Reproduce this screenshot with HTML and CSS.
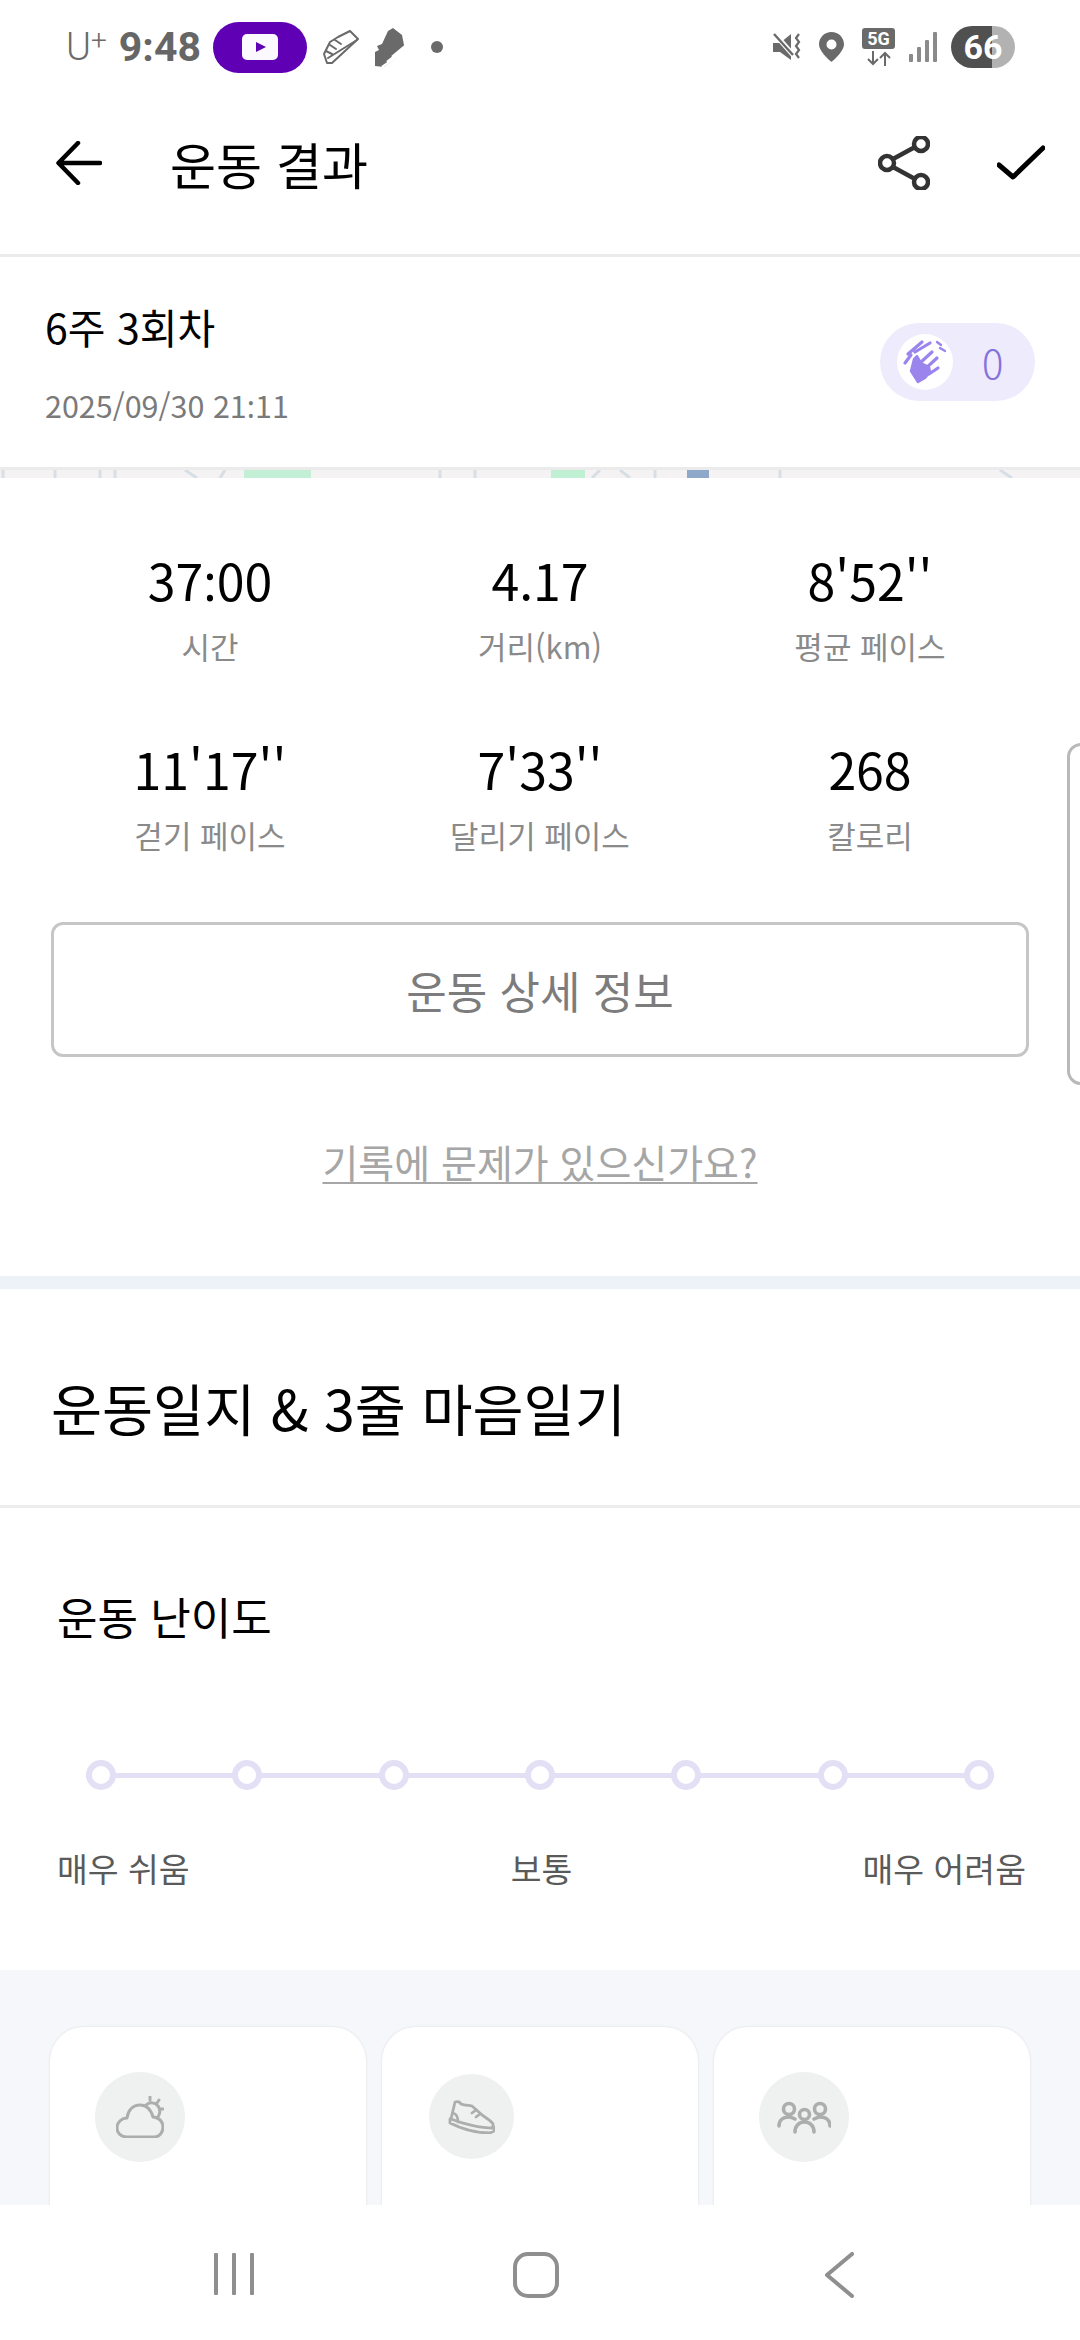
FILE: index.html
```html
<!DOCTYPE html>
<html lang="ko">
<head>
<meta charset="utf-8">
<title>운동 결과</title>
<link rel="stylesheet" href="styles.css">
</head>
<body>
<div class="screen">
  <div class="status">
    <div class="status-left">
      <span class="carrier">U<sup>+</sup></span>
      <span class="clock">9:48</span>
      <span class="yt-pill">
        <svg width="36" height="26" viewBox="0 0 36 26"><rect width="36" height="26" rx="5" fill="#fbf9ff"/><path d="M14 8l10 5-10 5z" fill="#5f00b5"/></svg>
      </span>
      <svg class="shoe-a" width="36" height="35" viewBox="0 0 36 35" fill="none" stroke="#6a6a6a" stroke-width="2" stroke-linejoin="round" stroke-linecap="round"><path d="M1 24L7 12l8-5L27 1l8 8L9 33H4z"/><path d="M5 28L34 10M7 15l6 4M12 10l6 4M3 21l6 3"/></svg>
      <svg class="shoe-b" width="30" height="39" viewBox="0 0 30 39"><path d="M1 38V24l4-2-2-4 5-2L14 3l5-3 9 7 2 10-6 12-14 10z" fill="#6a6a6a"/><path d="M8 39l22-15M13 34l17-13M18 29l12-10" stroke="#fff" stroke-width="2.400"/></svg>
      <span class="s-dot"></span>
    </div>
    <div class="status-right">
      <svg width="30" height="30" viewBox="0 0 30 30" fill="none"><path d="M1 11h7L19 2v26L8 20H1z" fill="#6a6a6a"/><path d="M1 0l22 25" stroke="#fff" stroke-width="5"/><path d="M2 2l19 21" stroke="#6a6a6a" stroke-width="2.400"/><path d="M27 2l-3 4 3 4-3 4 3 4-3 4 3 4" stroke="#6a6a6a" stroke-width="2.200"/></svg>
      <svg class="s-pin" width="25" height="30" viewBox="0 0 25 30"><path fill-rule="evenodd" d="M12.500 0C5.600 0 0 5.500 0 12.300 0 20 12.500 30 12.500 30S25 20 25 12.300C25 5.500 19.400 0 12.500 0zm0 7.500a5 5 0 1 1 0 10 5 5 0 0 1 0-10z" fill="#6a6a6a"/></svg>
      <span class="net">
        <span class="net-5g">5G</span>
        <svg width="26" height="15" viewBox="0 0 26 15" fill="none" stroke="#6a6a6a" stroke-width="2"><path d="M7 0v13M2 8l5 5 5-5M19 15V2M14 7l5-5 5 5"/></svg>
      </span>
      <svg width="28" height="30" viewBox="0 0 28 30" fill="#8a8a8a"><rect x="0" y="22" width="4" height="8" rx="1"/><rect x="8" y="15" width="4" height="15" rx="1"/><rect x="16" y="8" width="4" height="22" rx="1"/><rect x="24" y="0" width="4" height="30" rx="1"/></svg>
      <span class="battery">66</span>
    </div>
  </div>

  <header class="appbar">
    <svg class="back" width="46" height="44" viewBox="0 0 46 44" fill="none" stroke="#000" stroke-width="4.500" stroke-linecap="round" stroke-linejoin="round"><path d="M3 22h41M22 2L2.500 22 22 42"/></svg>
    <h1>운동 결과</h1>
    <svg class="share" width="52" height="54" viewBox="0 0 52 54" fill="none" stroke="#333" stroke-width="4.500"><circle cx="9" cy="27" r="7"/><circle cx="43" cy="8" r="7"/><circle cx="43" cy="46" r="7"/><path d="M15 23l22-12M15 31l22 12"/></svg>
    <svg class="check" width="48" height="36" viewBox="0 0 48 36" fill="none" stroke="#000" stroke-width="5" stroke-linecap="round" stroke-linejoin="round"><path d="M2 20l14 12L46 3"/></svg>
  </header>

  <section class="session">
    <div>
      <div class="session-name">6주 3회차</div>
      <div class="session-date">2025/09/30 21<span class="colon">:</span>11</div>
    </div>
    <div class="clap">
      <span class="clap-icon">
        <svg width="56" height="56" viewBox="0 0 56 56" fill="none" stroke="#9b85ec" stroke-width="3.200" stroke-linecap="round" stroke-linejoin="round"><path d="M8 29l6-8M11 20L25 8M18 18L33 9"/><path d="M14 37l3-12 3-3 4 7 8 4 1 5-5 6-7 4z" fill="#9b85ec" stroke-width="2.400"/><path d="M23 29l12-11M28 35l12-11M32 40l9-6"/><path d="M40 8l4 3M43 14l5 3" stroke-width="2.400"/></svg>
      </span>
      <span class="clap-count">0</span>
    </div>
  </section>

  <div class="map">
    <svg width="1080" height="8" viewBox="0 0 1080 8">
      <rect x="244" width="67" height="8" fill="#c2efd5"/><rect x="551" width="34" height="8" fill="#bff0d3"/><rect x="687" width="22" height="8" fill="#8ea8c9"/>
      <path d="M3 0v8M55 0v8M100 0v8M115 0v8M185 0l12 8M220 8l5-8M440 0v8M475 0v8M600 0l-8 8M620 0l10 8M655 0v8M780 0v8M1000 0l12 8" stroke="#d6dfe6" stroke-width="3" fill="none"/>
    </svg>
  </div>

  <section class="stats">
    <div class="stat-grid">
      <div class="stat"><b>37<i class="colon">:</i>00</b><span>시간</span></div>
      <div class="stat"><b>4.17</b><span>거리(km)</span></div>
      <div class="stat"><b>8'52''</b><span>평균 페이스</span></div>
      <div class="stat"><b>11'17''</b><span>걷기 페이스</span></div>
      <div class="stat"><b>7'33''</b><span>달리기 페이스</span></div>
      <div class="stat"><b>268</b><span>칼로리</span></div>
    </div>
    <div class="detail-btn">운동 상세 정보</div>
    <div class="issue"><a>기록에 문제가 있으신가요?</a></div>
    <div class="peek"></div>
  </section>

  <section class="diary-head">운동일지 &amp; 3줄 마음일기</section>

  <section class="difficulty">
    <div class="diff-title">운동 난이도</div>
    <div class="track">
      <i></i><i></i><i></i><i></i><i></i><i></i><i></i>
    </div>
    <div class="diff-labels"><span>매우 쉬움</span><span>보통</span><span>매우 어려움</span></div>
  </section>

  <section class="panel">
    <div class="card">
      <span class="card-ic">
        <svg width="48" height="42" viewBox="0 0 48 42" fill="none" stroke="#adadad" stroke-width="3" stroke-linecap="round" stroke-linejoin="round"><path d="M11 41C5 41 1 37 1 32c0-6 5-10 10-10C12 14 17 9 24 9c7 0 11 5 13 12 6 0 10 5 10 10 0 6-4 10-9 10z"/><path d="M30 9c3-3 9-3 12 1 3 4 2 9-1 12M34 1v3M43 4l-2 3M47 13h-3"/></svg>
      </span>
    </div>
    <div class="card">
      <span class="card-ic small">
        <svg width="47" height="34" viewBox="0 0 47 34" fill="none" stroke="#adadad" stroke-width="2.800" stroke-linejoin="round" stroke-linecap="round"><path d="M7 2c3-1 5 0 6 2 4 2 8 1 11 2l9 8c4 4 10 6 12 10v4C33 28 15 24 3 19z"/><path d="M2 19v4c10 5 26 10 40 10l4-2v-4M24 13l4-3M28 17l4-3M5 13c4 1 5 5 5 9"/></svg>
      </span>
    </div>
    <div class="card">
      <span class="card-ic">
        <svg width="54" height="33" viewBox="0 0 54 33" fill="none" stroke="#adadad" stroke-width="3.600" stroke-linecap="round"><circle cx="12" cy="8" r="5.500"/><circle cx="43" cy="8" r="5.500"/><circle cx="27.500" cy="13.500" r="5"/><path d="M2 25c0-6 4-9 10-9 2 0 4 1 6 2M37 18c2-1 4-2 6-2 6 0 10 3 10 9M18 31c0-6 4-10 9.500-10S37 25 37 31"/></svg>
      </span>
    </div>
  </section>

  <nav class="nav">
    <svg width="44" height="44" viewBox="0 0 44 44" fill="#8f8f8f"><rect x="2" y="1" width="4" height="42" rx="1"/><rect x="20" y="1" width="4" height="42" rx="1"/><rect x="38" y="1" width="4" height="42" rx="1"/></svg>
    <svg class="nav-home" width="46" height="46" viewBox="0 0 46 46" fill="none" stroke="#8f8f8f" stroke-width="4"><rect x="2" y="2" width="42" height="42" rx="13"/></svg>
    <svg class="nav-back" width="30" height="46" viewBox="0 0 30 46" fill="none" stroke="#8f8f8f" stroke-width="4" stroke-linecap="round" stroke-linejoin="round"><path d="M28 2L3 23l25 21"/></svg>
  </nav>
</div>
</body>
</html>
```
FILE: styles.css
```css
* { box-sizing: border-box; }
html, body { margin: 0; padding: 0; background: #fff; }
body { font-family: "Noto Sans CJK KR", "Noto Sans", sans-serif; color: #000; }
.screen { width: 1080px; height: 2340px; overflow: hidden; display: flex; flex-direction: column; position: relative; }
.colon { font-family: "Noto Sans", sans-serif; font-style: normal; line-height: 0; }

.status { height: 80px; flex: none; display: flex; justify-content: space-between; align-items: center; padding: 14px 65px 0 66px; }
.status-left, .status-right { display: flex; align-items: center; }
.carrier { font-family: "Roboto", sans-serif; font-size: 38px; font-weight: 300; color: #6a6a6a; line-height: 1; }
.carrier sup { font-size: 28px; line-height: 0; vertical-align: 10px; }
.clock { font-family: "Roboto", sans-serif; font-weight: 700; font-size: 41px; color: #666; margin-left: 12px; }
.yt-pill { width: 94px; height: 51px; border-radius: 26px; background: #5f00b5; display: flex; align-items: center; justify-content: center; margin-left: 12px; }
.shoe-a { margin-left: 16px; }
.shoe-b { margin-left: 15px; }
.s-dot { width: 12px; height: 12px; border-radius: 50%; background: #6a6a6a; margin-left: 27px; }
.status-right { gap: 14px; }
.s-pin { margin: 0 4px 0 3px; }
.net { display: flex; flex-direction: column; align-items: center; gap: 2px; }
.net-5g { width: 33px; height: 21px; border-radius: 3px; background: #6a6a6a; color: #fff; font: 700 18px/21px "Roboto", sans-serif; text-align: center; }
.battery { width: 64px; height: 42px; border-radius: 21px; background: linear-gradient(90deg, #505050 64%, #b2b2b2 64%); color: #fff; font: 700 34px/42px "Roboto", sans-serif; text-align: center; }

.appbar { height: 177px; flex: none; display: flex; align-items: center; padding: 0 35px 8px 56px; border-bottom: 3px solid #ebebeb; }
.appbar h1 { margin: 0 0 0 68px; font-size: 50px; font-weight: 400; flex: 1; line-height: 1; }
.share { margin-right: 67px; }

.session { height: 213px; flex: none; display: flex; justify-content: space-between; align-items: center; padding: 0 45px; border-bottom: 3px solid #ebebeb; }
.session-name { font-size: 41px; line-height: 56px; }
.session-date { font-size: 30.500px; line-height: 44px; color: #7a7a7a; margin-top: 29px; }
.clap { width: 155px; height: 78px; border-radius: 39px; background: #eeebfc; display: flex; align-items: center; padding-left: 17px; }
.clap-icon { width: 56px; height: 56px; border-radius: 50%; background: #fff; display: flex; align-items: center; justify-content: center; flex: none; }
.clap-count { color: #8472dc; font-size: 40px; margin-left: 29px; line-height: 1; font-weight: 300; }

.map { height: 8px; flex: none; background: #f4f2f2; line-height: 0; overflow: hidden; }

.stats { height: 811px; flex: none; padding: 0 51px; border-bottom: 13px solid #edf1f8; position: relative; }
.stat-grid { display: grid; grid-template-columns: repeat(3, 330px); margin: 0 -6px; padding-top: 67px; row-gap: 65px; }
.stat { display: flex; flex-direction: column; align-items: center; }
.stat b { font-weight: 400; font-size: 50px; line-height: 68px; }
.stat span { font-size: 31px; line-height: 46px; color: #8a8a8a; margin-top: 10px; }
.detail-btn { margin-top: 64px; height: 135px; border: 3px solid #c6c6c6; border-radius: 12px; display: flex; align-items: center; justify-content: center; font-size: 44px; color: #7c7c7c; }
.issue { text-align: center; margin-top: 78px; font-size: 39px; line-height: 52px; color: #a6a6a6; }
.issue a { text-decoration: underline; text-underline-offset: 4px; text-decoration-thickness: 2px; }
.peek { position: absolute; left: 1067px; top: 265px; width: 40px; height: 342px; border: 3px solid #b9b9b9; border-radius: 14px; }

.diary-head { height: 219px; flex: none; display: flex; align-items: center; padding: 20px 51px 0; font-size: 55.500px; border-bottom: 3px solid #ededed; }
.difficulty { height: 462px; flex: none; padding: 0 54px 0 57px; }
.diff-title { font-size: 44px; line-height: 60px; padding-top: 78px; height: 138px; }
.track { margin: 114px 32px 0 29px; height: 30px; display: flex; justify-content: space-between; align-items: center; background: linear-gradient(#e3dff5, #e3dff5) center / 100% 5px no-repeat; }
.track i { width: 30px; height: 30px; border: 6px solid #e3dff5; border-radius: 50%; background: #fff; }
.diff-labels { display: grid; grid-template-columns: 1fr auto 1fr; margin-top: 54px; font-size: 33.500px; line-height: 48px; color: #5a5a5a; }
.diff-labels span:last-child { text-align: right; }

.panel { flex: 1; background: #f6f7fb; display: flex; gap: 16px; padding: 57px 50px 0; min-height: 0; overflow: hidden; }
.card { flex: 1; background: #fff; border-radius: 34px 34px 0 0; box-shadow: 0 0 3px rgba(0,0,0,.1); padding: 45px; height: 400px; }
.card-ic { width: 90px; height: 90px; border-radius: 50%; background: #eff1f1; display: flex; align-items: center; justify-content: center; }
.card-ic.small { width: 85px; height: 85px; margin-top: 2px; margin-left: 2px; }

.nav { height: 135px; flex: none; background: #fff; display: flex; align-items: flex-start; padding: 47px 0 0 212px; position: relative; }
.nav-home { margin-left: 257px; }
.nav-back { margin-left: 265px; }
```
